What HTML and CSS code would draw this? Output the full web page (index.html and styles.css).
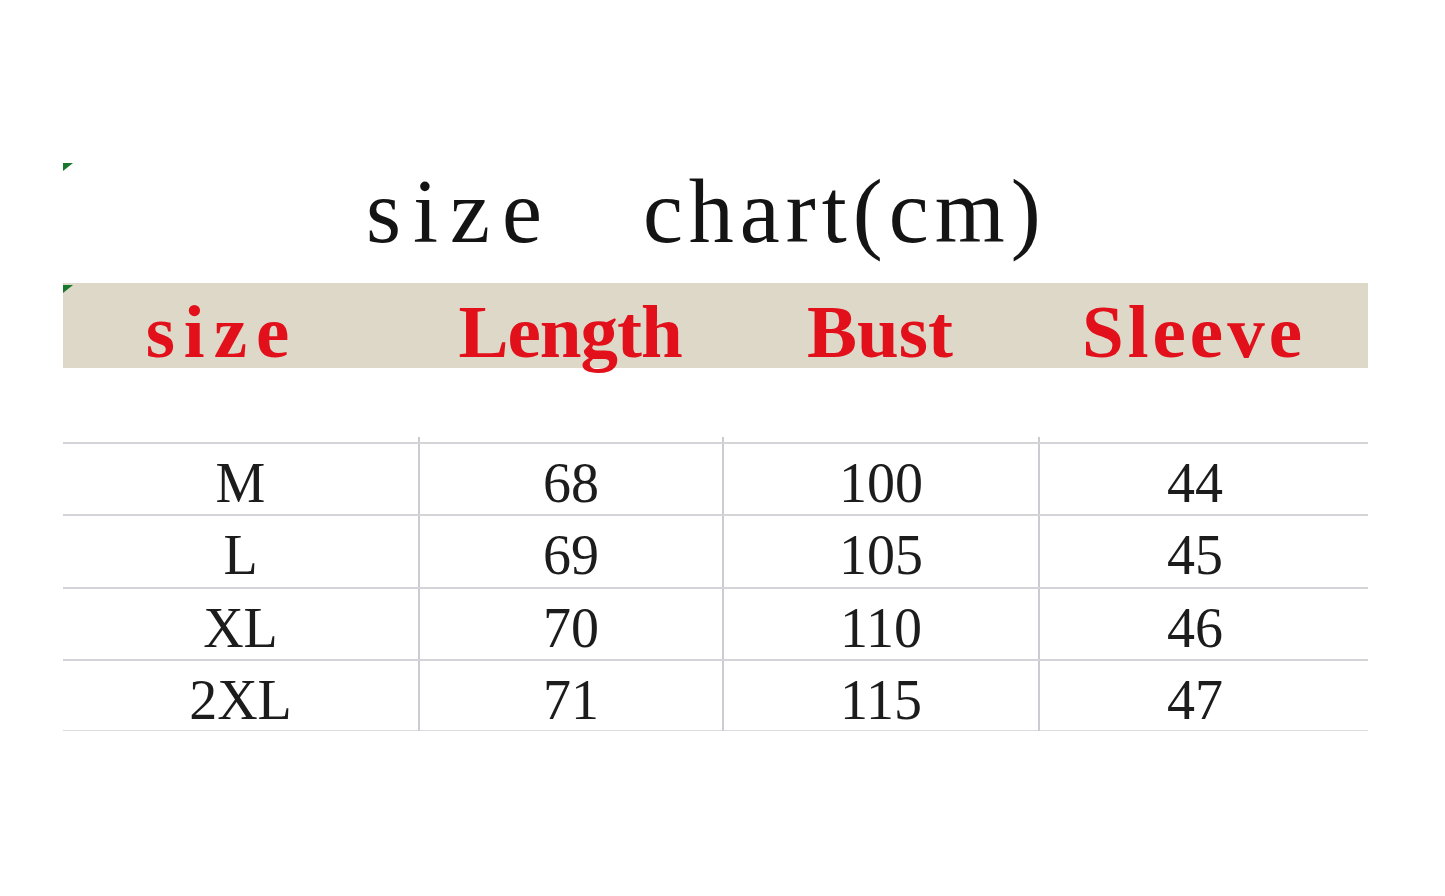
FILE: index.html
```
<!DOCTYPE html>
<html lang="en">
<head>
<meta charset="utf-8">
<title>size chart(cm)</title>
<link rel="stylesheet" href="styles.css">
</head>
<body>
<main class="sheet">
  <h1 class="title"><span class="t-size">size</span><span class="t-chart">chart(cm)</span></h1>
  <div class="head">
    <div class="hcell c1 ls-size">size</div>
    <div class="hcell c2 ls-length">Length</div>
    <div class="hcell c3">Bust</div>
    <div class="hcell c4 ls-sleeve">Sleeve</div>
  </div>
  <div class="table">
    <div class="row stub"><div class="cell c1"></div><div class="cell c2"></div><div class="cell c3"></div><div class="cell c4"></div></div>
    <div class="row line"><div class="cell c1">M</div><div class="cell c2">68</div><div class="cell c3">100</div><div class="cell c4">44</div></div>
    <div class="row line"><div class="cell c1">L</div><div class="cell c2">69</div><div class="cell c3">105</div><div class="cell c4">45</div></div>
    <div class="row line"><div class="cell c1">XL</div><div class="cell c2">70</div><div class="cell c3">110</div><div class="cell c4">46</div></div>
    <div class="row line last"><div class="cell c1">2XL</div><div class="cell c2">71</div><div class="cell c3">115</div><div class="cell c4">47</div></div>
  </div>
</main>
</body>
</html>
```
FILE: styles.css
```
* { box-sizing: border-box; }
html, body { margin: 0; padding: 0; background: #ffffff; }
body { font-family: "Liberation Serif", "Times New Roman", serif; }

.sheet {
  margin-left: 63px;
  width: 1305px;
  padding-top: 162px;
}

.title {
  position: relative;
  margin: 0;
  display: flex;
  gap: 89px;
  padding-left: 303px;
  font-size: 90px;
  line-height: 100px;
  font-weight: normal;
  color: #141414;
}
.title::before {
  content: "";
  position: absolute;
  left: 0;
  top: 1px;
  border-top: 8px solid #17782c;
  border-right: 10px solid transparent;
}
.t-size { letter-spacing: 12px; }
.t-chart { letter-spacing: 6px; }

.head {
  position: relative;
  margin-top: 21px;
  height: 85px;
  background: #ddd8c8;
  display: grid;
  grid-template-columns: 355px 304px 316px 330px;
  padding-top: 12px;
  font-size: 75px;
  line-height: 73px;
  font-weight: bold;
  color: #e2101b;
}
.head::before {
  content: "";
  position: absolute;
  left: 0;
  top: 2px;
  border-top: 8px solid #17782c;
  border-right: 10px solid transparent;
}
.hcell { text-align: center; white-space: nowrap; }
.hcell.c1 { padding-right: 37px; }
.hcell.c4 { padding-right: 18px; }
.ls-size { letter-spacing: 9px; }
.ls-length { letter-spacing: -1px; }
.ls-sleeve { letter-spacing: 4px; }

.table { margin-top: 69px; }

.row {
  display: grid;
  grid-template-columns: 355px 304px 316px 330px;
}
.row.stub { height: 5px; }
.row.line {
  height: 72.25px;
  border-top: 2px solid #d3d3d8;
}
.row.last { border-bottom: 1px solid #dcdce0; }

.cell {
  text-align: center;
  font-size: 56px;
  line-height: 62px;
  padding-top: 8px;
  color: #1c1c1c;
  white-space: nowrap;
}
.row.stub .cell { padding-top: 0; }
.cell.c2, .cell.c3, .cell.c4 { border-left: 2px solid #cbcbd2; }
.cell.c4 { padding-right: 18px; }
```
